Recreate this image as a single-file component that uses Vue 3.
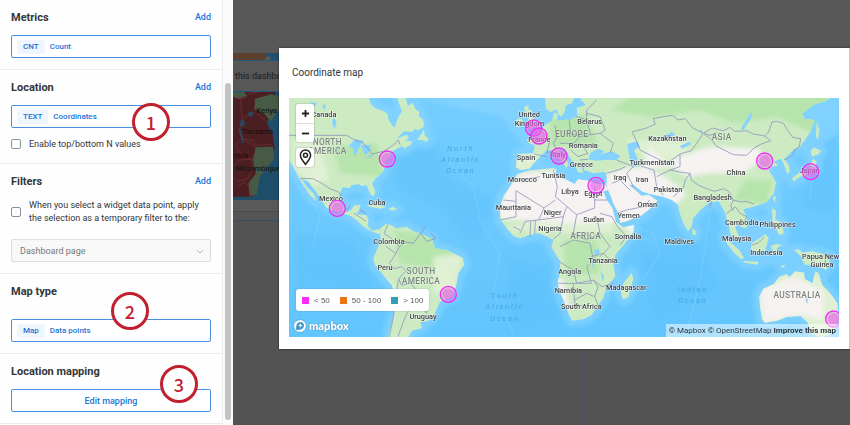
<script setup>
import { ref } from 'vue'

const topValues = ref(false)
const tempFilter = ref(false)

const legend = [
  { label: '< 50', tone: 'pink' },
  { label: '50 - 100', tone: 'orange' },
  { label: '> 100', tone: 'teal' },
]

const countries = [
  [972, 350, 'Canada'], [993, 602, 'Mexico'], [1131, 616, 'Cuba'],
  [1167, 731, 'Colombia'], [1155, 810, 'Peru'], [1269, 957, 'Uruguay'],
  [1588, 352, 'United'], [1588, 377, 'Kingdom'], [1618, 426, 'France'],
  [1769, 371, 'Belarus'], [1750, 443, 'Romania'], [1578, 480, 'Spain'],
  [1677, 471, 'Italy'], [1744, 501, 'Greece'], [1660, 534, 'Tunisia'],
  [1567, 547, 'Morocco'], [1860, 541, 'Iraq'], [1926, 545, 'Iran'],
  [1710, 583, 'Libya'], [1780, 588, 'Egypt'], [1942, 620, 'Oman'],
  [1540, 630, 'Mauritania'], [1658, 645, 'Niger'], [1886, 654, 'Yemen'],
  [1781, 667, 'Sudan'], [1650, 693, 'Nigeria'], [1884, 716, 'Somalia'],
  [1809, 788, 'Tanzania'], [1709, 823, 'Angola'], [1705, 880, 'Namibia'],
  [1744, 926, 'South Africa'], [1879, 869, 'Madagascar'],
  [2002, 422, 'Kazakhstan'], [1956, 496, 'Turkmenistan'], [2004, 575, 'Pakistan'],
  [2208, 524, 'China'], [2138, 601, 'Bangladesh'], [2429, 518, 'Japan'],
  [2225, 676, 'Cambodia'], [2333, 680, 'Philippines'], [2038, 731, 'Maldives'],
  [2210, 724, 'Malaysia'], [2299, 765, 'Indonesia'], [2462, 778, 'Papua New'],
  [2466, 801, 'Guinea'],
]

const continents = [
  [982, 435, 'NORTH'], [982, 463, 'AMERICA'], [1263, 822, 'SOUTH'],
  [1263, 851, 'AMERICA'], [1715, 410, 'EUROPE'], [1757, 717, 'AFRICA'],
  [2165, 421, 'ASIA'], [2391, 893, 'AUSTRALIA'],
]

const oceans = [
  [1382, 452, 'North'], [1382, 486, 'Atlantic'], [1382, 519, 'Ocean'],
  [1514, 894, 'South'], [1514, 928, 'Atlantic'], [1514, 962, 'Ocean'],
  [2078, 876, 'Indian'], [2078, 910, 'Ocean'],
]

const markers = [
  [1162, 477], [1012, 625], [1601, 384], [1617, 408], [1677, 468],
  [1788, 556], [2294, 483], [2432, 515], [1345, 883], [2501, 957],
]
</script>

<template>
  <div class="app">
    <aside class="sidebar">
      <div class="sections">
        <section class="section">
          <header class="head"><h2>Metrics</h2><a href="#">Add</a></header>
          <div class="field"><span class="tag">CNT</span><span>Count</span></div>
        </section>

        <section class="section">
          <header class="head"><h2>Location</h2><a href="#">Add</a></header>
          <div class="field">
            <span class="tag">TEXT</span><span>Coordinates</span>
            <b class="step step-one">1</b>
          </div>
          <label class="check top-values">
            <input v-model="topValues" type="checkbox" />
            <span>Enable top/bottom N values</span>
          </label>
        </section>

        <section class="section">
          <header class="head"><h2>Filters</h2><a href="#">Add</a></header>
          <label class="check">
            <input v-model="tempFilter" type="checkbox" />
            <span>When you select a widget data point, apply the selection as a temporary filter to the:</span>
          </label>
          <div class="select-wrap">
            <select aria-label="Filter scope" disabled><option>Dashboard page</option></select>
            <svg viewBox="0 0 8 5" class="chevron"><path d="M1 1l3 3 3-3" /></svg>
          </div>
        </section>

        <section class="section">
          <header class="head roomy"><h2>Map type</h2></header>
          <div class="field">
            <span class="tag">Map</span><span>Data points</span>
            <b class="step step-two">2</b>
          </div>
        </section>

        <section class="section">
          <header class="head"><h2>Location mapping</h2></header>
          <div class="mapping">
            <button type="button" class="edit">Edit mapping</button>
            <b class="step step-three">3</b>
          </div>
        </section>
      </div>
      <div class="gutter"><div class="thumb"></div></div>
    </aside>

    <main class="dashboard">
      <svg class="strip" viewBox="0 0 138 21" preserveAspectRatio="xMinYMin slice">
        <path fill="#21506f" d="M0 0h138v21H0z" />
        <path fill="#5d4030" d="M0 0h102l-6 9 8 6-10 6H0z" />
        <path fill="#55605a" d="M106 8l8 8-4 5h-16z" />
      </svg>
      <p class="notice">this dashboard</p>
      <svg class="dim-map" viewBox="0 0 138 324" preserveAspectRatio="xMinYMin slice">
        <path fill="#1f4e6b" d="M0 0h1800v324H0z" />
        <path fill="#4b1f22" d="M0 0h128l-8 40-18 52 18 40 6 40-36 22-10 60-20 60H0z" />
        <path fill="#465a45" d="M66 20l50-14 22 10v36l-24 36-20-22-30-14zM68 166l52-2 4 36-28 34-16 22-8 50-22 8-4-40 22-28-8-44zM0 0h34l8 12-26 8-16-4z" />
        <path fill="#1d4964" d="M22 86l8-6 6 14-6 12-8-2zM44 62l14-4 4 12-12 6zM18 112l6-2 10 42-6 2z" />
        <g fill="none" stroke="#7a3034" stroke-width="2">
          <path d="M0 14l14 4 20 2 14-16 30-4M20 10l8 70 36-20 38 30M28 82l-10 34 8 22 32 22 60-2M12 150l16-10 34 6 6 30-10 26-30-8-16-26zM0 222l20-18 34-2 8 24-18 34-28 8-16-12M10 284l26-14 20 24-8 30" />
        </g>
        <g class="dim-labels">
          <text x="70" y="62">Kenya</text>
          <text x="28" y="125" class="red">Tanzania</text>
          <text x="-32" y="198" class="red">Zambia</text>
          <text x="8" y="238">Mozambique</text>
        </g>
      </svg>
      <div class="band"></div>
      <div class="columns"><div></div><div></div></div>
    </main>

    <section class="modal" role="dialog" aria-labelledby="map-title">
      <h1 id="map-title">Coordinate map</h1>
      <div class="map">
        <svg class="world" viewBox="867 294 1650 717" role="img" aria-label="World map">
          <defs>
            <linearGradient id="sea" x1="0" y1="0" x2="0" y2="1">
              <stop offset="0" stop-color="#74cdff" /><stop offset="1" stop-color="#62c5fd" />
            </linearGradient>
            <filter id="soft" x="-10%" y="-10%" width="120%" height="120%"><feGaussianBlur stdDeviation="7" /></filter>
            <filter id="softer" x="-20%" y="-20%" width="140%" height="140%"><feGaussianBlur stdDeviation="12" /></filter>
            <g id="land">
              <g transform="translate(840 270)">
                <path d="M20 14H265L272 42 288 56 304 60 322 70 326 90 336 106 345 112 352 88 366 62 358 44 350 14H374L384 48 398 38 406 58 418 66 416 78 430 90 432 110 416 120 404 118 396 126 372 124 350 146 364 140 382 134 386 146 374 152 398 154 392 164 372 176 366 168 348 178 334 186 328 202 314 216 316 230 306 248 288 264 276 280 286 304 282 318 274 316 266 302 260 286 244 288 236 282 214 286 210 294 188 292 178 316 186 345 200 366 214 360 222 346 242 344 236 362 228 372 260 376 266 394 262 406 275 422 295 418 310 428 296 432 270 422 248 408 232 392 212 378 185 370 150 360 138 352 125 330 108 306 85 275 65 265 78 288 102 312 110 334 90 316 70 286 55 262 40 230 20 200Z" />
                <path d="M412 150L424 132 432 118 434 136 446 148 440 156 428 150Z" />
                <path d="M258 348L282 340 318 352 300 356ZM326 356L338 350 352 358 336 362Z" />
                <path d="M300 415L318 402 335 406 350 415 380 410 400 424 430 434 455 446 465 475 500 480 520 490 548 504 553 525 535 550 528 590 515 620 480 635 465 670 444 694 422 696 426 714 396 722 380 750H322L332 710 345 660 345 610 335 585 305 550 285 525 280 505 290 480 302 455Z" />
              </g>
              <g transform="translate(1380 270)">
                <path d="M172 252L205 242 240 238 280 234 290 240 285 254 300 264 320 270 344 282 354 268 385 272 410 282 436 284 444 300 430 304 440 330 456 352 468 395 490 412 522 405 520 425 494 462 468 492 460 520 466 560 440 590 430 625 410 650 395 675 370 688 335 692 325 670 315 640 297 600 294 570 302 545 298 510 285 490 274 470 280 450 262 440 235 430 210 435 180 445 160 438 145 420 122 390 120 350 130 320 150 290Z" />
                <path d="M515 548L520 565 505 622 488 628 482 605 490 580Z" />
                <path d="M192 52L206 44 204 56 216 62 212 74 226 92 246 104 240 112 204 114 212 100 202 92 208 84 196 72ZM164 98L176 84 188 90 186 106 168 112Z" />
                <path d="M254 14H348L336 40 318 46 314 66 304 80 294 72 290 58 272 66 258 56Z" />
                <path d="M1124 14L1096 34 1060 44 1026 72 1034 86 1064 90 1050 128 1020 170 1002 178 974 206 986 226 990 244 982 252 970 218 962 206 940 216 956 226 936 230 926 240 948 276 942 310 920 336 880 350 850 358 862 390 860 414 846 412 832 400 826 414 838 440 828 452 812 434 806 404 794 366 776 334 746 338 722 360 700 384 694 412 684 424 670 400 658 366 654 344 636 330 610 320 570 312 545 304 520 284 508 286 530 304 545 318 565 314 592 332 575 352 545 376 500 394 480 398 478 374 462 344 448 308 440 290 440 260 436 246 400 250 372 240 374 222 362 224 370 248 354 246 344 222 330 202 314 178 298 176 302 192 320 210 326 226 318 234 308 216 290 200 280 182 262 180 246 194 226 215 208 236 182 240 168 232 172 192 220 190 224 166 206 158 198 148 220 148 224 134 242 122 256 104 276 92 282 68 294 72 292 92 328 88 352 80 350 54 378 44 362 30 364 14Z" />
              </g>
              <g transform="translate(1950 270)">
                <path d="M126 415L138 424 136 436 128 434ZM482 182L492 172 514 182 504 194 486 200ZM488 206L500 214 496 238 476 252 448 262 430 274 426 264 448 248 478 236ZM500 94L508 120 504 150 498 140Z" />
                <path d="M368 322L378 318 374 340ZM366 355L378 362 376 388 394 398 402 430 388 436 380 420 368 400Z" />
                <path d="M222 438L240 456 268 480 282 504 274 508 252 488 232 462ZM280 512L326 516 322 524 284 518ZM304 460L330 444 346 432 356 444 346 480 318 490 302 476ZM362 468L378 462 396 466 380 474 386 496 372 490ZM392 528L406 524 400 534Z" />
                <path d="M432 480L448 478 456 488 486 484 530 494 540 520 528 540 500 526 464 524 452 498Z" />
                <path d="M328 620L340 596 372 582 388 560 410 552 418 562 436 544 462 548 464 568 488 580 496 544 506 550 516 584 542 612 562 640 566 690 548 730 512 744 484 730 474 698 452 678 412 680 380 692 344 698 336 686 330 650Z" />
              </g>
            </g>
            <mask id="land-mask" maskUnits="userSpaceOnUse" x="867" y="294" width="1650" height="717">
              <use href="#land" fill="#fff" />
            </mask>
          </defs>

          <path fill="url(#sea)" d="M867 294h1650v717H867z" />
          <g filter="url(#softer)" fill="#59bdfb" opacity=".35">
            <path d="M1190 470L1300 420 1360 540 1480 600 1430 740 1310 620 1180 560ZM880 700L1060 720 1120 880 900 860ZM1520 780L1640 800 1660 960 1540 990ZM1920 760L2080 720 2160 860 1960 980ZM2440 420L2517 400V640L2400 620Z" />
          </g>
          <g filter="url(#soft)" opacity=".6">
            <use href="#land" fill="#8ad6ff" stroke="#8ad6ff" stroke-width="38" stroke-linejoin="round" />
            <path fill="#8ad6ff" d="M1240 294H1640V390L1560 420 1500 350ZM2400 294H2517V400L2440 450 2370 470ZM2180 640L2330 650 2400 790 2300 800 2190 740Z" />
          </g>
          <g fill="none" stroke="#8ad5ff" stroke-width="4" opacity=".4">
            <path d="M1340 480L1420 560 1440 660 1500 760 1480 880 1540 1000M1900 680L1960 700 1980 760 1930 840M2130 640L2100 840 2060 1000M900 560L960 640 940 740M2517 420L2440 480 2430 600M1900 700L1960 730" />
          </g>
          <use href="#land" fill="#cdebc3" />

          <g mask="url(#land-mask)">
            <g filter="url(#soft)">
              <path fill="#b6e4ac" d="M1180 690L1300 710 1400 760 1330 810 1200 790ZM1900 284L2500 280 2440 400 2330 350 2200 370 2100 330 1960 350 1830 330ZM1000 440L1130 430 1150 530 1020 520ZM1690 720L1790 720 1800 820 1700 830ZM2240 540L2320 540 2300 610 2200 600ZM1650 360L1760 340 1790 430 1650 440Z" />
              <path fill="#dff0d3" d="M880 420L950 410 990 540 940 560 880 500ZM1300 770L1390 760 1360 880 1300 880ZM1880 420L2060 420 2060 480 1940 480ZM1140 820L1200 870 1180 960 1160 930ZM1540 460L1620 460 1590 510 1540 510ZM2270 850L2420 800 2520 870 2510 1010 2280 980ZM1640 650L1830 650 1840 700 1500 690Z" />
            </g>
            <g filter="url(#soft)" fill="#f5f2f1">
              <path d="M1520 560L1560 520 1660 510 1840 540 1900 700 1850 670 1680 670 1480 655ZM1820 520L1900 500 1980 520 2060 580 1940 720 1850 650ZM2000 490L2080 455 2130 440 2280 445 2290 480 2230 520 2130 520 2060 530ZM1950 440L2010 500 1920 510ZM2280 870L2380 830 2470 870 2470 960 2400 945 2290 970Z" />
              <path d="M1660 830L1690 840 1710 930 1680 930ZM1880 670L1910 670 1900 730Z" />
            </g>
          </g>

          <g fill="#86d2fe">
            <path d="M1046 438L1066 418 1092 422 1082 434 1072 452 1066 470 1058 444ZM1082 436L1110 434 1112 450 1096 466ZM1092 474L1120 462 1116 470ZM1000 350L1010 366 1004 386 996 370ZM930 305L950 310 944 320ZM966 318L978 312 974 330Z" />
            <path d="M1764 478L1772 458 1794 446 1812 452 1804 462 1836 454 1862 468 1850 480 1816 480 1790 482ZM1882 432L1912 424 1920 440 1902 450 1912 476 1922 498 1900 500 1888 472ZM1984 412L2016 396 2026 406 1994 414ZM2040 438L2066 426 2074 432 2046 446ZM2222 386L2250 342 2256 336 2252 356 2230 390ZM2416 900L2424 894 2422 912Z" />
            <path d="M1780 752L1796 746 1800 760 1788 766ZM1802 812L1812 830 1808 846ZM1774 770L1782 800 1778 804ZM1700 350L1718 338 1722 352 1708 362ZM2096 394L2108 388 2104 400Z" />
          </g>

          <g class="borders">
            <path d="M867 406H1040L1060 418 1088 428 1106 448 1116 462 1150 454 1180 436 1194 420 1200 434M900 535L938 536 966 550 990 566 1016 576 1024 588M1018 638L1040 632 1050 616M1062 640L1084 654 1098 664M1080 630L1098 640" />
            <path d="M1164 674L1152 700 1176 716 1198 740 1188 760 1158 740M1198 740L1216 726 1240 730 1262 700 1276 680M1262 700L1280 724 1306 716 1292 698M1188 760L1168 790 1182 806 1206 800 1218 812 1196 836 1204 856 1232 850 1264 888 1286 906 1280 940 1258 918 1232 920 1216 950 1194 1010M1196 836L1188 880 1182 940 1168 1011" />
            <path d="M1556 542L1620 530M1660 510L1672 560 1666 590 1730 644 1784 624V560M1510 600L1548 604 1548 572 1632 624 1666 600M1784 600H1822M1548 604V650L1500 660M1632 624L1616 660 1576 664 1560 700M1616 660L1690 650 1700 620M1690 650L1680 700 1660 718M1730 644L1720 700 1760 720 1800 700 1790 650M1800 700L1830 740 1800 770M1680 740L1720 720 1770 730 1780 780 1760 800 1774 850 1730 850 1720 810 1676 784M1774 770L1810 760 1842 790M1676 850L1728 850 1780 840 1806 860 1840 850M1720 850L1724 910 1750 920M1724 900L1760 880 1784 890 1800 930M1780 840L1794 860 1784 890M1540 680L1560 690M1592 664L1590 710M1606 662L1604 702M1850 676L1880 710 1860 736M1800 640L1836 650 1850 676" />
            <path d="M1602 462L1640 470M1622 390L1650 420 1640 460 1670 448 1660 430 1672 410 1664 376M1708 362L1712 400 1740 410 1772 404 1760 360 1730 350M1740 410L1720 430 1680 430M1712 440L1740 430 1764 460 1734 470 1712 450M1740 480L1764 478M1772 404L1800 400 1840 430 1830 460M1760 360L1760 330 1790 300M1760 340L1800 350 1816 390 1800 400M1850 480L1900 500 1880 520 1900 560M1820 520L1860 508 1876 500M1836 550L1860 540 1890 570M1850 640L1880 630 1930 620 1950 600M1922 498L1962 510 1970 560 1990 586" />
            <path d="M1920 450L1908 420 1896 396 1940 384 1966 372 1960 356 1990 350 2018 346 2034 360 2056 356 2078 384 2110 400 2130 406 2150 398M2110 400L2090 430 2074 452 2040 462 2000 490 1960 470 1920 450M2110 400L2136 384 2170 392 2190 382 2204 394 2240 392 2260 402 2294 408 2312 422 2284 432 2262 444 2240 466 2200 464 2172 450 2148 438 2136 420 2110 400M2294 408L2306 396 2316 366 2330 364 2350 370 2362 390 2378 412 2402 416 2398 440 2386 448 2376 468 2352 480" />
            <path d="M2040 462L2040 500 2010 510 1970 530M2010 510L2040 516 2070 520 2074 540 2096 556 2120 566 2144 574 2170 566 2186 574 2200 600 2192 618 2200 632M2070 520L2056 540 2050 564 2020 590M2120 590L2134 604 2130 624M2200 600L2224 606 2240 604 2262 612M2180 640L2206 620 2220 640 2240 650 2230 672" />
            <path d="M2254 736L2276 728 2294 710M2476 758V794" />
          </g>

          <g class="oceans"><text v-for="(o, i) in oceans" :key="i" :x="o[0]" :y="o[1]">{{ o[2] }}</text></g>
          <g class="continents"><text v-for="(c, i) in continents" :key="i" :x="c[0]" :y="c[1]">{{ c[2] }}</text></g>
          <g class="countries"><text v-for="c in countries" :key="c[2]" :x="c[0]" :y="c[1]">{{ c[2] }}</text></g>
          <g v-for="(m, i) in markers" :key="i" class="marker">
            <circle class="dot" :cx="m[0]" :cy="m[1]" r="18" />
            <circle class="ring" :cx="m[0]" :cy="m[1]" r="24" />
          </g>
        </svg>

        <div class="controls">
          <div class="zoom">
            <button type="button" aria-label="Zoom in"><svg viewBox="0 0 10 10"><path d="M5 1v8M1 5h8" /></svg></button>
            <button type="button" aria-label="Zoom out"><svg viewBox="0 0 10 10"><path d="M1 5h8" /></svg></button>
          </div>
          <button type="button" class="pin" aria-label="Locate">
            <svg viewBox="0 0 12 16"><path d="M6 14.500C3.500 11 1.200 8.700 1.200 5.800a4.800 4.800 0 0 1 9.600 0C10.800 8.700 8.500 11 6 14.500z" /><circle cx="6" cy="5.800" r="1.900" /></svg>
          </button>
        </div>

        <ul class="legend">
          <li v-for="l in legend" :key="l.label"><i :class="l.tone"></i>{{ l.label }}</li>
        </ul>

        <div class="logo">
          <svg viewBox="0 0 14 14"><circle cx="7" cy="7" r="6.300" fill="#fff" stroke="#4d9fc9" stroke-width=".7" /><path fill="#4596c3" d="M3.300 11C2.800 7.500 3.500 3 7.500 3a3.600 3.600 0 0 1 3.500 3.600C11 10.200 7 11.300 3.300 11z" /><path fill="#fff" d="M7.400 4.300l.7 1.500 1.500.7-1.500.7-.7 1.500-.7-1.500-1.500-.7 1.500-.7z" /></svg>
          <span>mapbox</span>
        </div>
        <div class="credits">
          <a href="#">© Mapbox</a> <a href="#">© OpenStreetMap</a> <a href="#" class="improve">Improve this map</a>
        </div>
      </div>
    </section>
  </div>
</template>

<style>
body { margin: 0; background: #535353; }
</style>

<style scoped>
* { box-sizing: border-box; }
.app { position: relative; display: flex; height: 100vh; overflow: hidden; font-family: Roboto, "Open Sans", sans-serif; font-size: 9px; color: #32363a; }
h1, h2, p, ul { margin: 0; padding: 0; }
a { color: inherit; text-decoration: none; }
button { font: inherit; padding: 0; cursor: pointer; }

.sidebar { display: flex; flex: 0 0 233px; background: #fff; }
.sections { flex: 1; background: #fefefe; }
.section { padding: 9px 11px 11px; border-bottom: 1px solid #e9ebed; }
.head { display: flex; justify-content: space-between; align-items: center; height: 16px; margin-bottom: 10px; }
.head.roomy { margin-bottom: 20px; }
.head h2 { font-size: 11px; font-weight: 700; }
.head a { font-size: 9px; font-weight: 500; color: #2374d8; }
.field { position: relative; display: flex; align-items: center; gap: 5px; height: 23px; padding: 0 5px; border: 1px solid #4a8fe2; border-radius: 2px; background: #fff; font-size: 8px; font-weight: 500; color: #2374d8; }
.tag { padding: 0 6px; line-height: 14px; background: #eff6fe; border-radius: 2px; }
.check { display: flex; align-items: center; gap: 8px; line-height: 13px; }
.check input { appearance: none; flex: none; width: 10px; height: 10px; margin: 0; border: 1px solid #8b9096; border-radius: 2px; background: #fff; }
.top-values { height: 16px; margin-top: 8px; }
.select-wrap { position: relative; margin-top: 14px; }
select { appearance: none; display: block; width: 100%; height: 23px; padding: 0 8px; border: 1px solid #dcdedf; border-radius: 2px; background: #f8f8f8; font: inherit; color: #74787c; opacity: 1; }
.chevron { position: absolute; right: 7px; top: 10px; width: 8px; height: 5px; fill: none; stroke: #b9bdc0; }
.mapping { position: relative; }
.edit { display: block; width: 100%; height: 23px; border: 1px solid #4a8fe2; border-radius: 2px; background: #fff; color: #2374d8; font-weight: 500; }
.step { position: absolute; display: grid; place-items: center; width: 38px; height: 38px; border: 3px solid #c2202f; border-radius: 50%; background: #fff; color: #c2202f; font: 500 18px/30px "Noto Sans CJK SC", sans-serif; }
.step-one { left: 120px; top: -3px; }
.step-two { left: 99px; top: -28px; }
.step-three { left: 149px; top: -24px; }
.gutter { flex: 0 0 11px; padding: 83px 2px 5px; border-left: 1px solid #ececec; background: #fafafa; }
.thumb { height: 100%; border-radius: 4px; background: #c2c2c2; }

.dashboard { display: flex; flex: 1; flex-direction: column; padding-top: 53px; background: #585858; overflow: hidden; color: #1c1c1c; }
.strip { width: 46px; height: 7px; }
.notice { height: 32px; border: 1px solid #24587b; border-width: 1px 0; line-height: 31px; font-size: 9px; white-space: nowrap; padding-left: 2px; background: #575757; }
.dim-map { flex: none; width: 46px; height: 108px; }
.dim-labels { font-size: 23px; font-family: Roboto, sans-serif; font-weight: 500; fill: #151a1c; }
.dim-labels .red { fill: #280d10; }
.band { height: 21px; border-bottom: 1px solid #34516b; background: linear-gradient(#595959 11px, #4b4b4b 11px, #4b4b4b 12px, #555 12px); }
.columns { display: grid; flex: 1; grid-template-columns: 350px 1fr; background: #535353; }
.columns div:first-child { border-right: 1px solid #465162; }

.modal { position: absolute; top: 48px; left: 279px; right: 0; padding: 0 10px 12px; border-right: 1px solid #c8c8c8; background: #fff; box-shadow: 0 0 2px rgba(0, 0, 0, .6); }
.modal h1 { padding-left: 3px; font-size: 10px; font-weight: 400; line-height: 50px; }
.map { position: relative; overflow: hidden; }
.world { display: block; width: 100%; }
.borders { fill: none; stroke: #8d94ba; stroke-width: 3; stroke-linejoin: round; opacity: .8; }
.world text { font-family: Roboto, sans-serif; text-anchor: middle; }
.countries { font-size: 22px; font-weight: 500; fill: #3c3f42; stroke: rgba(255, 255, 255, .7); stroke-width: 3; paint-order: stroke; }
.continents { font-size: 25px; font-weight: 500; fill: #7d8581; letter-spacing: 1px; stroke: rgba(255, 255, 255, .4); stroke-width: 3; paint-order: stroke; }
.oceans { font-size: 23px; font-style: italic; letter-spacing: 5px; fill: #42a8e4; }
.dot { fill: #e35be6; opacity: .55; }
.ring { fill: rgba(235, 110, 240, .3); stroke: #f02df2; stroke-width: 4; }

.controls { position: absolute; top: 6px; left: 7px; display: grid; gap: 6px; width: 18px; }
.zoom { border-radius: 3px; background: #fff; box-shadow: 0 0 1px 1px rgba(0, 0, 0, .1); }
.controls button { display: grid; place-items: center; width: 18px; height: 19px; border: 0; background: #fff; border-radius: 3px; }
.zoom button + button { border-top: 1px solid #ddd; border-radius: 0 0 3px 3px; }
.controls svg { width: 9px; fill: none; stroke: #222; stroke-width: 2; }
.controls .pin { box-shadow: 0 0 1px 1px rgba(0, 0, 0, .1); }
.controls .pin svg { width: 13px; height: 17px; stroke-width: 1.4; }
.legend { position: absolute; left: 7px; bottom: 26px; display: flex; align-items: center; gap: 10px; height: 22px; padding: 0 6px; border-radius: 3px; background: #fff; box-shadow: 0 0 2px rgba(0, 0, 0, .2); list-style: none; font-family: "Liberation Sans", sans-serif; font-size: 8px; color: #55595c; white-space: nowrap; }
.legend li { display: flex; align-items: center; gap: 5px; }
.legend i { width: 7px; height: 7px; }
.pink { background: #f92bfa; }
.orange { background: #ea7512; }
.teal { background: #319fb5; }
.logo { position: absolute; left: 4px; bottom: 4px; display: flex; align-items: center; gap: 2px; font: 800 11px/14px Lato, sans-serif; color: #fff; text-shadow: 0 0 1px #347ea6, 0 0 1px #347ea6; }
.logo svg { width: 14px; height: 14px; }
.credits { position: absolute; right: 0; bottom: 0; padding: 0 3px; background: rgba(255, 255, 255, .5); font-size: 8px; line-height: 13px; color: #30383d; white-space: nowrap; }
.improve { font-weight: 700; }
</style>
